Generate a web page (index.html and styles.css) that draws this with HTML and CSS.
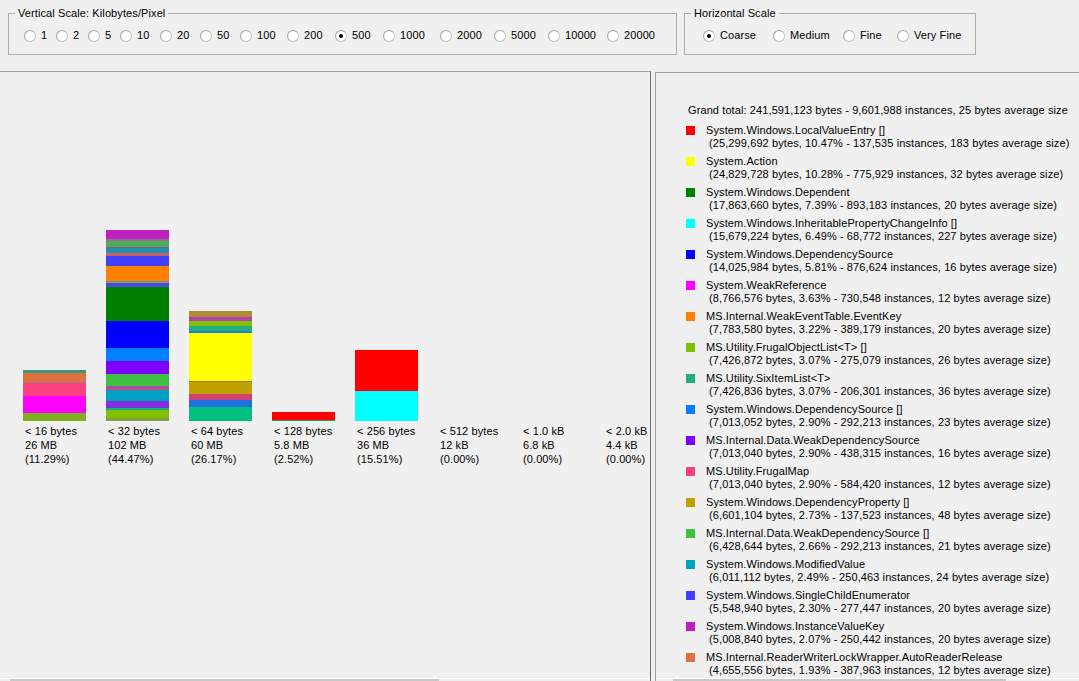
FILE: index.html
```html
<!DOCTYPE html>
<html>
<head>
<meta charset="utf-8">
<link rel="stylesheet" href="styles.css">
</head>
<body>
<div class="app">
  <div class="toolbar">
    <fieldset class="group group-vertical">
      <legend>Vertical Scale: Kilobytes/Pixel</legend>
      <div class="radios radios-vertical">
        <div class="opt"><span class="radio"></span><span>1</span></div>
        <div class="opt"><span class="radio"></span><span>2</span></div>
        <div class="opt"><span class="radio"></span><span>5</span></div>
        <div class="opt"><span class="radio"></span><span>10</span></div>
        <div class="opt"><span class="radio"></span><span>20</span></div>
        <div class="opt"><span class="radio"></span><span>50</span></div>
        <div class="opt"><span class="radio"></span><span>100</span></div>
        <div class="opt"><span class="radio"></span><span>200</span></div>
        <div class="opt"><span class="radio checked"></span><span>500</span></div>
        <div class="opt"><span class="radio"></span><span>1000</span></div>
        <div class="opt"><span class="radio"></span><span>2000</span></div>
        <div class="opt"><span class="radio"></span><span>5000</span></div>
        <div class="opt"><span class="radio"></span><span>10000</span></div>
        <div class="opt"><span class="radio"></span><span>20000</span></div>
      </div>
    </fieldset>
    <fieldset class="group group-horizontal">
      <legend>Horizontal Scale</legend>
      <div class="radios radios-horizontal">
        <div class="opt"><span class="radio checked"></span><span>Coarse</span></div>
        <div class="opt"><span class="radio"></span><span>Medium</span></div>
        <div class="opt"><span class="radio"></span><span>Fine</span></div>
        <div class="opt"><span class="radio"></span><span>Very Fine</span></div>
      </div>
    </fieldset>
  </div>

  <div class="main">
    <div class="chart-panel">
      <div class="chart">
        <div class="col">
          <div class="bar-area">
            <div class="bar">
              <div class="seg" style="height:3px;background:#3a9a80"></div>
              <div class="seg" style="height:9px;background:#e07040"></div>
              <div class="seg" style="height:1px;background:#a08070"></div>
              <div class="seg" style="height:13px;background:#ff4080"></div>
              <div class="seg" style="height:17px;background:#ff00ff"></div>
              <div class="seg" style="height:8px;background:#80b020"></div>
            </div>
          </div>
          <div class="label">&lt; 16 bytes<br>26 MB<br>(11.29%)</div>
        </div>
        <div class="col">
          <div class="bar-area">
            <div class="bar">
              <div class="seg" style="height:9px;background:#c020c0"></div>
              <div class="seg" style="height:2px;background:#8a70a0"></div>
              <div class="seg" style="height:6px;background:#50b050"></div>
              <div class="seg" style="height:1px;background:#9050b0"></div>
              <div class="seg" style="height:5px;background:#2090b0"></div>
              <div class="seg" style="height:3px;background:#d06060"></div>
              <div class="seg" style="height:10px;background:#4040ff"></div>
              <div class="seg" style="height:15px;background:#ff8000"></div>
              <div class="seg" style="height:1px;background:#6090a0"></div>
              <div class="seg" style="height:1px;background:#90a060"></div>
              <div class="seg" style="height:4px;background:#4a4ae0"></div>
              <div class="seg" style="height:34px;background:#008000"></div>
              <div class="seg" style="height:27px;background:#0000ff"></div>
              <div class="seg" style="height:13px;background:#0080ff"></div>
              <div class="seg" style="height:13px;background:#8000ff"></div>
              <div class="seg" style="height:12px;background:#40c040"></div>
              <div class="seg" style="height:2px;background:#a050b0"></div>
              <div class="seg" style="height:2px;background:#d04880"></div>
              <div class="seg" style="height:11px;background:#00a0c0"></div>
              <div class="seg" style="height:7px;background:#8030e0"></div>
              <div class="seg" style="height:2px;background:#20b080"></div>
              <div class="seg" style="height:8px;background:#80c000"></div>
              <div class="seg" style="height:3px;background:#80a040"></div>
            </div>
          </div>
          <div class="label">&lt; 32 bytes<br>102 MB<br>(44.47%)</div>
        </div>
        <div class="col">
          <div class="bar-area">
            <div class="bar">
              <div class="seg" style="height:6px;background:#b08c30"></div>
              <div class="seg" style="height:4px;background:#b040b0"></div>
              <div class="seg" style="height:5px;background:#80c000"></div>
              <div class="seg" style="height:5px;background:#20b080"></div>
              <div class="seg" style="height:2px;background:#2080d0"></div>
              <div class="seg" style="height:48px;background:#ffff00"></div>
              <div class="seg" style="height:1px;background:#b07050"></div>
              <div class="seg" style="height:12px;background:#c0a000"></div>
              <div class="seg" style="height:6px;background:#d04070"></div>
              <div class="seg" style="height:7px;background:#2070e0"></div>
              <div class="seg" style="height:14px;background:#00c080"></div>
            </div>
          </div>
          <div class="label">&lt; 64 bytes<br>60 MB<br>(26.17%)</div>
        </div>
        <div class="col">
          <div class="bar-area">
            <div class="bar">
              <div class="seg" style="height:8px;background:#ff0000"></div>
              <div class="seg" style="height:1px;background:#20a060"></div>
            </div>
          </div>
          <div class="label">&lt; 128 bytes<br>5.8 MB<br>(2.52%)</div>
        </div>
        <div class="col">
          <div class="bar-area">
            <div class="bar">
              <div class="seg" style="height:41px;background:#ff0000"></div>
              <div class="seg" style="height:30px;background:#00ffff"></div>
            </div>
          </div>
          <div class="label">&lt; 256 bytes<br>36 MB<br>(15.51%)</div>
        </div>
        <div class="col">
          <div class="bar-area"></div>
          <div class="label">&lt; 512 bytes<br>12 kB<br>(0.00%)</div>
        </div>
        <div class="col">
          <div class="bar-area"></div>
          <div class="label">&lt; 1.0 kB<br>6.8 kB<br>(0.00%)</div>
        </div>
        <div class="col">
          <div class="bar-area"></div>
          <div class="label">&lt; 2.0 kB<br>4.4 kB<br>(0.00%)</div>
        </div>
      </div>
      <div class="hscroll"><div class="thumb thumb-chart"></div></div>
    </div>

    <div class="legend-panel">
      <div class="legend-list">
        <div class="grand">Grand total: 241,591,123 bytes - 9,601,988 instances, 25 bytes average size</div>
        <div class="entry"><span class="sw" style="background:#ff0000"></span><div class="txt"><div class="name">System.Windows.LocalValueEntry []</div><div class="detail">(25,299,692 bytes, 10.47% - 137,535 instances, 183 bytes average size)</div></div></div>
        <div class="entry"><span class="sw" style="background:#ffff00"></span><div class="txt"><div class="name">System.Action</div><div class="detail">(24,829,728 bytes, 10.28% - 775,929 instances, 32 bytes average size)</div></div></div>
        <div class="entry"><span class="sw" style="background:#008000"></span><div class="txt"><div class="name">System.Windows.Dependent</div><div class="detail">(17,863,660 bytes, 7.39% - 893,183 instances, 20 bytes average size)</div></div></div>
        <div class="entry"><span class="sw" style="background:#00ffff"></span><div class="txt"><div class="name">System.Windows.InheritablePropertyChangeInfo []</div><div class="detail">(15,679,224 bytes, 6.49% - 68,772 instances, 227 bytes average size)</div></div></div>
        <div class="entry"><span class="sw" style="background:#0000ff"></span><div class="txt"><div class="name">System.Windows.DependencySource</div><div class="detail">(14,025,984 bytes, 5.81% - 876,624 instances, 16 bytes average size)</div></div></div>
        <div class="entry"><span class="sw" style="background:#ff00ff"></span><div class="txt"><div class="name">System.WeakReference</div><div class="detail">(8,766,576 bytes, 3.63% - 730,548 instances, 12 bytes average size)</div></div></div>
        <div class="entry"><span class="sw" style="background:#ff8000"></span><div class="txt"><div class="name">MS.Internal.WeakEventTable.EventKey</div><div class="detail">(7,783,580 bytes, 3.22% - 389,179 instances, 20 bytes average size)</div></div></div>
        <div class="entry"><span class="sw" style="background:#80c000"></span><div class="txt"><div class="name">MS.Utility.FrugalObjectList&lt;T&gt; []</div><div class="detail">(7,426,872 bytes, 3.07% - 275,079 instances, 26 bytes average size)</div></div></div>
        <div class="entry"><span class="sw" style="background:#20b080"></span><div class="txt"><div class="name">MS.Utility.SixItemList&lt;T&gt;</div><div class="detail">(7,426,836 bytes, 3.07% - 206,301 instances, 36 bytes average size)</div></div></div>
        <div class="entry"><span class="sw" style="background:#0080ff"></span><div class="txt"><div class="name">System.Windows.DependencySource []</div><div class="detail">(7,013,052 bytes, 2.90% - 292,213 instances, 23 bytes average size)</div></div></div>
        <div class="entry"><span class="sw" style="background:#8000ff"></span><div class="txt"><div class="name">MS.Internal.Data.WeakDependencySource</div><div class="detail">(7,013,040 bytes, 2.90% - 438,315 instances, 16 bytes average size)</div></div></div>
        <div class="entry"><span class="sw" style="background:#ff4080"></span><div class="txt"><div class="name">MS.Utility.FrugalMap</div><div class="detail">(7,013,040 bytes, 2.90% - 584,420 instances, 12 bytes average size)</div></div></div>
        <div class="entry"><span class="sw" style="background:#c0a000"></span><div class="txt"><div class="name">System.Windows.DependencyProperty []</div><div class="detail">(6,601,104 bytes, 2.73% - 137,523 instances, 48 bytes average size)</div></div></div>
        <div class="entry"><span class="sw" style="background:#40c040"></span><div class="txt"><div class="name">MS.Internal.Data.WeakDependencySource []</div><div class="detail">(6,428,644 bytes, 2.66% - 292,213 instances, 21 bytes average size)</div></div></div>
        <div class="entry"><span class="sw" style="background:#00a0c0"></span><div class="txt"><div class="name">System.Windows.ModifiedValue</div><div class="detail">(6,011,112 bytes, 2.49% - 250,463 instances, 24 bytes average size)</div></div></div>
        <div class="entry"><span class="sw" style="background:#4040ff"></span><div class="txt"><div class="name">System.Windows.SingleChildEnumerator</div><div class="detail">(5,548,940 bytes, 2.30% - 277,447 instances, 20 bytes average size)</div></div></div>
        <div class="entry"><span class="sw" style="background:#c020c0"></span><div class="txt"><div class="name">System.Windows.InstanceValueKey</div><div class="detail">(5,008,840 bytes, 2.07% - 250,442 instances, 20 bytes average size)</div></div></div>
        <div class="entry"><span class="sw" style="background:#e07040"></span><div class="txt"><div class="name">MS.Internal.ReaderWriterLockWrapper.AutoReaderRelease</div><div class="detail">(4,655,556 bytes, 1.93% - 387,963 instances, 12 bytes average size)</div></div></div>
      </div>
      <div class="hscroll"><div class="thumb thumb-legend"></div></div>
    </div>
  </div>
</div>
</body>
</html>
```

FILE: styles.css
```css
html, body {
  margin: 0;
  padding: 0;
  background: #f0f0f0;
}

body {
  width: 1079px;
  height: 681px;
  overflow: hidden;
  font-family: "Liberation Sans", Arial, sans-serif;
  font-size: 11px;
  letter-spacing: 0.1px;
  color: #000;
}

.app {
  display: flex;
  flex-direction: column;
  height: 681px;
}

/* ---------- top group boxes ---------- */
.toolbar {
  height: 71px;
  flex: none;
  box-sizing: border-box;
  display: flex;
  align-items: flex-start;
  gap: 7px;
  padding: 7px 0 0 8px;
}

.group {
  margin: 0;
  padding: 9px 0 12px 0;
  border: 1px solid #adadad;
  box-sizing: border-box;
  min-width: 0;
}

.group legend {
  margin-left: 6px;
  padding: 0 3px;
  line-height: 13px;
  font-size: 11px;
}

.group-vertical {
  width: 669px;
}

.group-horizontal {
  width: 292px;
}

.radios {
  display: grid;
  align-items: center;
  height: 13px;
}

.radios-vertical {
  margin-left: 15px;
  grid-template-columns: 32px 32px 32px 40px 40px 40px 47px 48px 48px 57px 54px 54px 59px auto;
}

.radios-horizontal {
  margin-left: 18px;
  grid-template-columns: 70px 70px 54px auto;
}

.opt {
  display: flex;
  align-items: center;
  gap: 5px;
  white-space: nowrap;
  line-height: 13px;
}

.radio {
  width: 12px;
  height: 12px;
  box-sizing: border-box;
  border-radius: 50%;
  border: 1px solid #c4c4c4;
  border-top-color: #a4a4a4;
  border-left-color: #a4a4a4;
  background: radial-gradient(circle at 55% 55%, #ffffff 55%, #ececec 100%);
  flex: none;
  position: relative;
}

.radio.checked::after {
  content: "";
  position: absolute;
  left: 3px;
  top: 3px;
  width: 4px;
  height: 4px;
  border-radius: 50%;
  background: #000;
}

/* ---------- main area ---------- */
.main {
  flex: 1;
  min-height: 0;
  display: flex;
  gap: 4px;
}

.chart-panel {
  width: 651px;
  flex: none;
  box-sizing: border-box;
  border-top: 1px solid #a0a0a0;
  border-right: 1px solid #6a6a6a;
  display: flex;
  flex-direction: column;
  overflow: hidden;
}

.chart {
  flex: 1;
  min-height: 0;
  display: flex;
  padding-left: 23px;
  overflow: hidden;
}

.col {
  width: 83px;
  flex: none;
  display: flex;
  flex-direction: column;
}

.bar-area {
  height: 349px;
  display: flex;
  flex-direction: column;
  justify-content: flex-end;
}

.bar {
  width: 63px;
  display: flex;
  flex-direction: column;
}

.seg {
  flex: none;
}

.label {
  margin-top: 3px;
  padding-left: 2px;
  line-height: 14px;
  white-space: nowrap;
}

.hscroll {
  height: 3px;
  flex: none;
  box-sizing: border-box;
  border-top: 1px solid #ffffff;
  background: #f0f0f0;
}

.thumb {
  height: 2px;
  background: #c8c8c8;
}

.thumb-chart {
  margin-left: 10px;
  width: 429px;
}

.thumb-legend {
  margin-left: 17px;
  width: 333px;
}

/* ---------- legend panel ---------- */
.legend-panel {
  flex: 1;
  min-width: 0;
  margin-top: 1px;
  box-sizing: border-box;
  border-top: 1px solid #a0a0a0;
  border-left: 1px solid #a0a0a0;
  display: flex;
  flex-direction: column;
  overflow: hidden;
}

.legend-list {
  flex: 1;
  min-height: 0;
  overflow: hidden;
  padding: 31px 0 0 30px;
}

.grand {
  padding-left: 2px;
  line-height: 13px;
  white-space: nowrap;
  margin-bottom: 7px;
}

.entry {
  display: flex;
  align-items: flex-start;
  gap: 11px;
  margin-bottom: 5px;
}

.sw {
  width: 9px;
  height: 9px;
  margin-top: 2px;
  flex: none;
}

.txt {
  line-height: 13px;
  white-space: nowrap;
}

.detail {
  padding-left: 3px;
}
```
